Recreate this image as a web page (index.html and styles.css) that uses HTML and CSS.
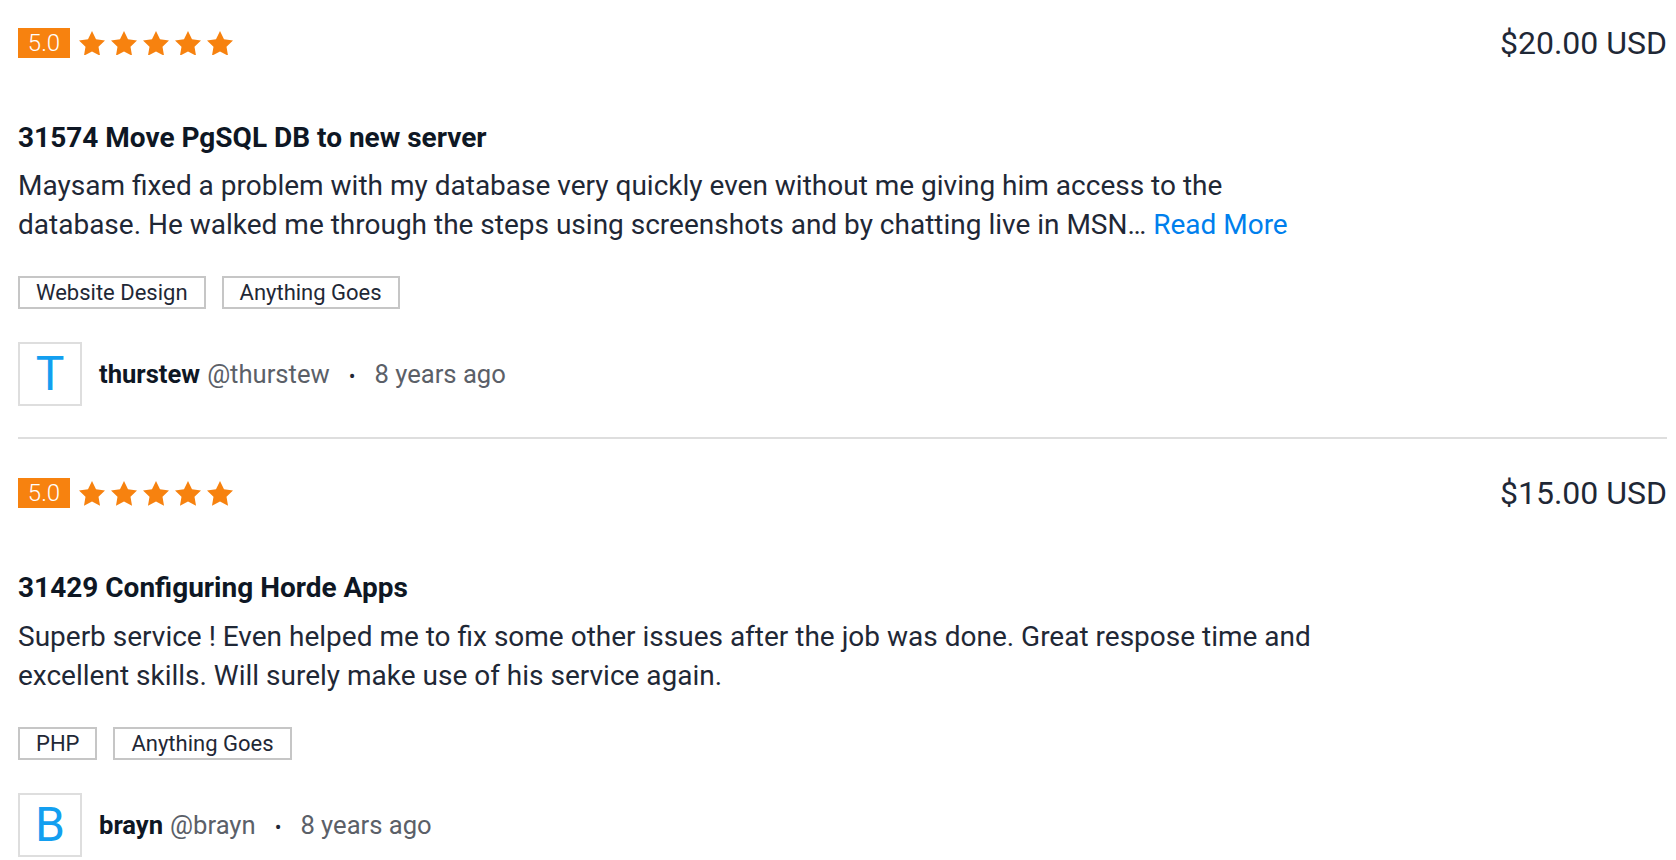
FILE: index.html
```html
<!DOCTYPE html>
<html lang="en">
<head>
<meta charset="utf-8">
<title>Reviews</title>
<link rel="stylesheet" href="styles.css">
</head>
<body>
<div class="reviews">
  <article class="review">
    <div class="review-head">
      <div class="rating">
        <span class="rating-badge">5.0</span>
        <span class="stars">
          <svg class="star" viewBox="2 2 20 19"><path d="M12 2l3.09 6.26L22 9.27l-5 4.87 1.18 6.88L12 17.77l-6.18 3.25L7 14.14 2 9.27l6.91-1.01L12 2z"/></svg>
          <svg class="star" viewBox="2 2 20 19"><path d="M12 2l3.09 6.26L22 9.27l-5 4.87 1.18 6.88L12 17.77l-6.18 3.25L7 14.14 2 9.27l6.91-1.01L12 2z"/></svg>
          <svg class="star" viewBox="2 2 20 19"><path d="M12 2l3.09 6.26L22 9.27l-5 4.87 1.18 6.88L12 17.77l-6.18 3.25L7 14.14 2 9.27l6.91-1.01L12 2z"/></svg>
          <svg class="star" viewBox="2 2 20 19"><path d="M12 2l3.09 6.26L22 9.27l-5 4.87 1.18 6.88L12 17.77l-6.18 3.25L7 14.14 2 9.27l6.91-1.01L12 2z"/></svg>
          <svg class="star" viewBox="2 2 20 19"><path d="M12 2l3.09 6.26L22 9.27l-5 4.87 1.18 6.88L12 17.77l-6.18 3.25L7 14.14 2 9.27l6.91-1.01L12 2z"/></svg>
        </span>
      </div>
      <div class="price">$20.00 USD</div>
    </div>
    <h3 class="review-title">31574 Move PgSQL DB to new server</h3>
    <p class="review-text">Maysam fixed a problem with my database very quickly even without me giving him access to the database. He walked me through the steps using screenshots and by chatting live in MSN… <a class="read-more" href="#">Read More</a></p>
    <ul class="tags">
      <li class="tag">Website Design</li>
      <li class="tag">Anything Goes</li>
    </ul>
    <div class="reviewer">
      <div class="avatar">T</div>
      <div class="reviewer-meta">
        <span class="reviewer-name">thurstew</span>
        <span class="reviewer-handle">@thurstew</span>
        <span class="sep">•</span>
        <span class="reviewer-time">8 years ago</span>
      </div>
    </div>
  </article>

  <article class="review">
    <div class="review-head">
      <div class="rating">
        <span class="rating-badge">5.0</span>
        <span class="stars">
          <svg class="star" viewBox="2 2 20 19"><path d="M12 2l3.09 6.26L22 9.27l-5 4.87 1.18 6.88L12 17.77l-6.18 3.25L7 14.14 2 9.27l6.91-1.01L12 2z"/></svg>
          <svg class="star" viewBox="2 2 20 19"><path d="M12 2l3.09 6.26L22 9.27l-5 4.87 1.18 6.88L12 17.77l-6.18 3.25L7 14.14 2 9.27l6.91-1.01L12 2z"/></svg>
          <svg class="star" viewBox="2 2 20 19"><path d="M12 2l3.09 6.26L22 9.27l-5 4.87 1.18 6.88L12 17.77l-6.18 3.25L7 14.14 2 9.27l6.91-1.01L12 2z"/></svg>
          <svg class="star" viewBox="2 2 20 19"><path d="M12 2l3.09 6.26L22 9.27l-5 4.87 1.18 6.88L12 17.77l-6.18 3.25L7 14.14 2 9.27l6.91-1.01L12 2z"/></svg>
          <svg class="star" viewBox="2 2 20 19"><path d="M12 2l3.09 6.26L22 9.27l-5 4.87 1.18 6.88L12 17.77l-6.18 3.25L7 14.14 2 9.27l6.91-1.01L12 2z"/></svg>
        </span>
      </div>
      <div class="price">$15.00 USD</div>
    </div>
    <h3 class="review-title">31429 Configuring Horde Apps</h3>
    <p class="review-text">Superb service ! Even helped me to fix some other issues after the job was done. Great respose time and excellent skills. Will surely make use of his service again.</p>
    <ul class="tags">
      <li class="tag">PHP</li>
      <li class="tag">Anything Goes</li>
    </ul>
    <div class="reviewer">
      <div class="avatar">B</div>
      <div class="reviewer-meta">
        <span class="reviewer-name">brayn</span>
        <span class="reviewer-handle">@brayn</span>
        <span class="sep">•</span>
        <span class="reviewer-time">8 years ago</span>
      </div>
    </div>
  </article>
</div>
</body>
</html>
```

FILE: styles.css
```css
html, body {
  margin: 0;
  padding: 0;
  background: #ffffff;
}

body {
  font-family: Roboto, "Liberation Sans", Arial, sans-serif;
  color: #1f2836;
  font-size: 25.6px;
  line-height: 1.5;
}

.reviews {
  padding: 0 9px 0 18px;
}

.review {
  padding: 39px 0 31px;
  border-bottom: 2px solid #dedede;
}

.review:first-child {
  padding-top: 28px;
}

.review-head {
  display: flex;
  justify-content: space-between;
  align-items: center;
  height: 30px;
}

.rating {
  display: flex;
  align-items: center;
}

.rating-badge {
  display: inline-flex;
  align-items: center;
  justify-content: center;
  width: 52px;
  height: 30px;
  background: #f7820f;
  color: #ffffff;
  font-size: 24px;
  font-weight: 300;
  line-height: 30px;
}

.stars {
  display: flex;
  gap: 6px;
  margin-left: 9px;
}

.star {
  width: 26px;
  height: 24.7px;
  fill: #f7820f;
  display: block;
}

.price {
  font-size: 32px;
  line-height: 30px;
  color: #1f2836;
}

.review-title {
  margin: 61px 0 0;
  font-size: 28px;
  line-height: 38.4px;
  font-weight: 700;
  color: #0e1724;
}

.review-text {
  margin: 9px 0 0;
  max-width: 1318px;
  font-size: 28px;
  line-height: 39px;
  color: #1f2836;
}

.read-more {
  color: #007fed;
  text-decoration: none;
}

.tags {
  list-style: none;
  margin: 32px 0 0;
  padding: 0;
  display: flex;
  gap: 16px;
}

.tag {
  border: 2px solid #c6c6c6;
  padding: 0 16px;
  font-size: 22px;
  line-height: 29px;
  color: #1f2836;
}

.reviewer {
  display: flex;
  align-items: center;
  gap: 17px;
  margin-top: 33px;
}

.avatar {
  width: 60px;
  height: 60px;
  border: 2px solid #dedede;
  display: flex;
  align-items: center;
  justify-content: center;
  font-size: 48px;
  line-height: 1;
  color: #139ff0;
  flex: none;
}

.reviewer-meta {
  display: flex;
  align-items: baseline;
  font-size: 25.6px;
  color: #5b6068;
}

.reviewer-name {
  font-weight: 700;
  color: #0e1724;
  margin-right: 7px;
}

.sep {
  font-size: 20px;
  margin: 0 19px;
  color: #1f2836;
}
```
